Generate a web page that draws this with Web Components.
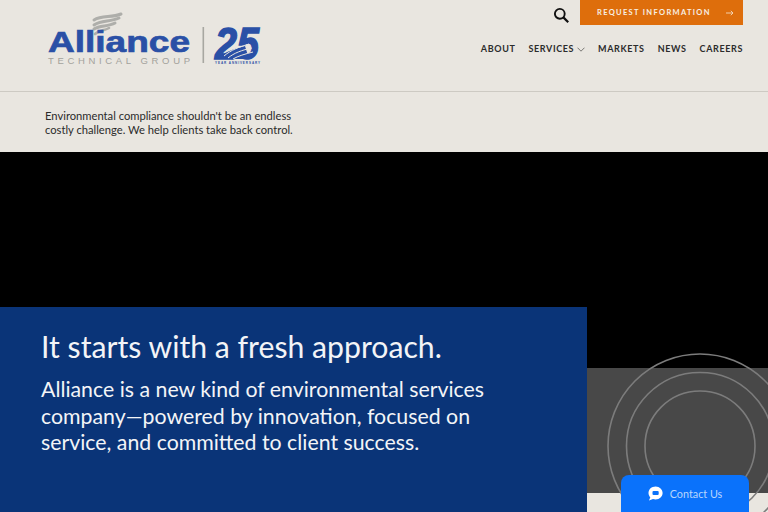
<!DOCTYPE html>
<html lang="en">
<head>
<meta charset="utf-8">
<title>Alliance Technical Group</title>
<style>
html, body { margin: 0; height: 100%; overflow: hidden; background: #e9e6e0; }
body { font-family: Lato, "Noto Sans", sans-serif; }
</style>
</head>
<body>
<site-header></site-header>
<site-tagline>Environmental compliance shouldn't be an endless<br>costly challenge. We help clients take back control.</site-tagline>
<hero-section>
  <h1 slot="title">It starts with a fresh approach.</h1>
  <p slot="body">Alliance is a new kind of environmental services<br>company—powered by innovation, focused on<br>service, and committed to client success.</p>
</hero-section>
<contact-button>Contact Us</contact-button>

<script>
class AllianceLogo extends HTMLElement {
  connectedCallback() {
    this.attachShadow({mode: 'open'}).innerHTML = `
<style>
:host { display: block; width: 215px; height: 56px; }
svg { display: block; overflow: visible; }
.name { font: bold 30px "Liberation Sans", sans-serif; fill: #2a50a6; stroke: #2a50a6; stroke-width: .7px; }
.sub { font: 9.5px "Liberation Sans", sans-serif; fill: #a3a29c; }
.num { font: italic bold 44px "Liberation Sans", sans-serif; fill: #2a50a6; stroke: #2a50a6; stroke-width: 1.4px; }
.year { font: bold 3px "Liberation Sans", sans-serif; fill: #2a50a6; }
</style>
<svg width="215" height="56" viewBox="0 0 215 56" aria-label="Alliance Technical Group">
  <g fill="none" stroke="#aeaeaa" stroke-linecap="round">
    <path stroke-width="3" d="M46 8 C54 3 63 6 73 2"/>
    <path stroke-width="3" d="M46 13 C53 8 62 10 71 6"/>
    <path stroke-width="3" d="M46 17 C52 13 60 15 67 11"/>
    <path stroke-width="2.600" d="M47 22 C51 18 56 19 61 16"/>
  </g>
  <text class="name" x="0" y="40" textLength="142" lengthAdjust="spacingAndGlyphs">Alliance</text>
  <text class="sub" x="0" y="51.500" textLength="142">TECHNICAL GROUP</text>
  <rect x="154.500" y="15" width="1.600" height="36" fill="#a8a7a1"/>
  <text class="num" x="167" y="47" textLength="44" lengthAdjust="spacingAndGlyphs">25</text>
  <path d="M169 47 C176 40 186 37 197 34 L201 47Z" fill="#2a50a6"/>
  <g fill="none" stroke="#e9e6e0" stroke-width="1">
    <path d="M176 44 C183 38 191 35 201 32"/>
    <path d="M180 46 C186 41 194 38 204 36"/>
    <path d="M185 47 C190 44 197 42 205 40"/>
  </g>
  <text class="year" x="167" y="51.500" textLength="45">YEAR ANNIVERSARY</text>
</svg>`;
  }
}
customElements.define('alliance-logo', AllianceLogo);

class SiteHeader extends HTMLElement {
  connectedCallback() {
    const links = ['About', 'Services', 'Markets', 'News', 'Careers'];
    const items = links.map(l => `<a>${l}${l === 'Services' ? `<svg width="8" height="5" viewBox="0 0 8 5"><path d="M.5 .7 4 4.200 7.500 .7" fill="none" stroke="#6b6a66" stroke-width=".9"/></svg>` : ''}</a>`).join('');
    this.attachShadow({mode: 'open'}).innerHTML = `
<style>
:host { display: flex; justify-content: space-between; height: 91px; box-sizing: border-box; padding: 0 25px 0 48px; background: #e9e6e0; }
.logo { padding-top: 12px; }
.right { display: flex; flex-direction: column; align-items: flex-end; }
.top { display: flex; align-items: flex-start; gap: 10px; }
.search { display: block; margin: 7px 0 0; }
.cta { width: 163px; height: 25px; box-sizing: border-box; padding: 0 9px 0 17px; background: #de6e0c; color: #f7efe4; font-size: 7.500px; font-weight: 700; letter-spacing: 1.330px; white-space: nowrap; display: flex; align-items: center; justify-content: space-between; }
nav { display: flex; gap: 13px; margin-top: 16px; font-size: 9px; font-weight: 700; letter-spacing: .62px; color: #2c2c2c; text-transform: uppercase; line-height: 16px; }
nav a { display: flex; align-items: center; gap: 3px; }
</style>
<div class="logo"><alliance-logo></alliance-logo></div>
<div class="right">
  <div class="top">
    <svg class="search" width="17" height="17" viewBox="0 0 17 17"><circle cx="6.800" cy="6.800" r="4.900" fill="none" stroke="#111" stroke-width="1.900"/><path d="M10.400 10.400 15.200 15.200" stroke="#111" stroke-width="2.200"/></svg>
    <div class="cta"><span>REQUEST INFORMATION</span><svg width="8" height="6" viewBox="0 0 8 6"><path d="M0 3H7M4.800 .8 7 3 4.800 5.200" fill="none" stroke="#f3d9bd" stroke-width=".9"/></svg></div>
  </div>
  <nav>${items}</nav>
</div>`;
  }
}
customElements.define('site-header', SiteHeader);

class SiteTagline extends HTMLElement {
  connectedCallback() {
    this.attachShadow({mode: 'open'}).innerHTML = `
<style>
:host { display: block; height: 61px; box-sizing: border-box; padding: 17px 0 0 45px; border-top: 1.500px solid #cdcac3; color: #2b2b2b; font-size: 11.200px; line-height: 14px; background: #e9e6e0; }
</style>
<slot></slot>`;
  }
}
customElements.define('site-tagline', SiteTagline);

class HeroSection extends HTMLElement {
  connectedCallback() {
    this.attachShadow({mode: 'open'}).innerHTML = `
<style>
:host { display: grid; grid-template-columns: 587px 1fr; height: 360px; background: #000; position: relative; overflow: hidden; }
.panel { margin-top: 155px; background: #0a3478; color: #f3f4f7; padding: 19px 0 0 41px; }
::slotted(h1) { margin: 0 0 10px; font-size: 30.200px; line-height: 40px; font-weight: 400; }
::slotted(p) { margin: 0; font-size: 21.300px; line-height: 26.500px; }
.side { display: flex; flex-direction: column; }
.black { height: 216px; }
.gray { height: 125px; background: #484848; }
.rest { flex: 1; background: #e9e6e0; }
svg { position: absolute; left: 587px; top: 190px; }
</style>
<div class="panel"><slot name="title"></slot><slot name="body"></slot></div>
<div class="side"><div class="black"></div><div class="gray"></div><div class="rest"></div></div>
<svg width="181" height="200" viewBox="0 0 181 200" fill="none" stroke="#7c7c7c" stroke-width="1.600">
  <circle cx="113" cy="104" r="55"/>
  <circle cx="113" cy="104" r="73.500"/>
  <circle cx="113" cy="104" r="92"/>
</svg>`;
  }
}
customElements.define('hero-section', HeroSection);

class ContactButton extends HTMLElement {
  connectedCallback() {
    this.attachShadow({mode: 'open'}).innerHTML = `
<style>
:host { position: fixed; left: 621px; top: 475px; width: 128px; height: 37px; display: flex; justify-content: center; align-items: center; gap: 7px; box-sizing: border-box; background: #0a72fb; border-radius: 8px 8px 0 0; color: #b9d6fd; font-size: 10.800px; }
</style>
<svg width="15" height="15" viewBox="0 0 15 15"><path d="M7.600 .5C3.600 .5.5 3.300.5 7c0 1.700.7 3.200 1.800 4.300L1 14.600l4-1.600c.8.3 1.700.4 2.600.4 4 0 7-2.900 7-6.400S11.600 .5 7.600 .5Z" fill="#fff"/><rect x="4.500" y="5" width="6.200" height="4" rx="1" fill="#0a72fb"/></svg>
<slot></slot>`;
  }
}
customElements.define('contact-button', ContactButton);
</script>
</body>
</html>
